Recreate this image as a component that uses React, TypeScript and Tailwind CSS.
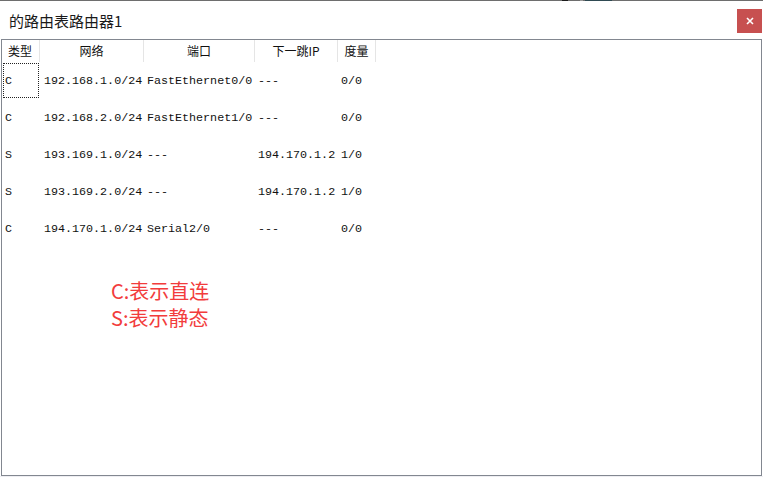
const rows = [
  { t: "C", net: "192.168.1.0/24", port: "FastEthernet0/0", hop: "---", m: "0/0" },
  { t: "C", net: "192.168.2.0/24", port: "FastEthernet1/0", hop: "---", m: "0/0" },
  { t: "S", net: "193.169.1.0/24", port: "---", hop: "194.170.1.2", m: "1/0" },
  { t: "S", net: "193.169.2.0/24", port: "---", hop: "194.170.1.2", m: "1/0" },
  { t: "C", net: "194.170.1.0/24", port: "Serial2/0", hop: "---", m: "0/0" },
];

const cols = ["w-[38px]", "w-[104px]", "w-[111px]", "w-[83px]", "w-[38px]"];

const App = () => {
  return (
    <div className="w-[763px] h-[477px] bg-white flex flex-col overflow-hidden font-['Noto_Sans_CJK_SC',sans-serif]">
      {/* top edge */}
      <div className="h-px flex bg-[#6e6e6e]">
        <div className="ml-[562px] w-[6px] bg-[#1c1c1c]" />
        <div className="ml-[12px] w-[3px] bg-[#9a9a9a]" />
        <div className="ml-[2px] w-[27px] bg-[#2f4a52]" />
      </div>

      {/* title bar */}
      <div className="h-[38px] flex justify-between pl-[9px] pr-px">
        <p className="text-[15px] leading-none text-[#1a1a1a] mt-[12px]">的路由表路由器1</p>
        <button className="w-[25px] h-[24px] mt-[8px] bg-[#c75050] flex items-center justify-center">
          <svg width="8" height="8" viewBox="0 0 8 8">
            <path d="M1 1L7 7M7 1L1 7" stroke="#fff" strokeWidth="1.6" />
          </svg>
        </button>
      </div>

      {/* list */}
      <div className="ml-px w-[761px] h-[437px] border border-[#828790] bg-white flex flex-col">
        {/* header */}
        <div className="h-[22px] flex text-[12px] text-[#111]">
          {["类型", "网络", "端口", "下一跳IP", "度量"].map((h, i) => (
            <div
              key={h}
              className={`${cols[i]} h-full border-r border-[#e5e5e5] flex items-center ${i === 0 ? "pl-[6px]" : "justify-center"}`}
            >
              {h}
            </div>
          ))}
        </div>

        {/* rows */}
        <div className="flex flex-col font-['Liberation_Mono',monospace] text-[11.7px] text-[#111]">
          {rows.map((r, idx) => (
            <div key={idx} className="h-[37px] flex">
              <div className="w-[38px] h-full p-px">
                <div className={`h-full flex items-center pl-px pt-[3px] ${idx === 0 ? "border border-dotted border-[#222]" : "border border-transparent"}`}>
                  {r.t}
                </div>
              </div>
              <div className="w-[104px] flex items-center pl-[4px] pt-[3px] whitespace-nowrap">{r.net}</div>
              <div className="w-[111px] flex items-center pl-[3px] pt-[3px] whitespace-nowrap">{r.port}</div>
              <div className="w-[83px] flex items-center pl-[3px] pt-[3px] whitespace-nowrap">{r.hop}</div>
              <div className="w-[38px] flex items-center pl-[3px] pt-[3px] whitespace-nowrap">{r.m}</div>
            </div>
          ))}
        </div>

        {/* legend */}
        <div className="mt-[30px] pl-[109px] text-[20px] leading-[27px] text-[#f23c3c]">
          <p>C:表示直连</p>
          <p>S:表示静态</p>
        </div>
      </div>

      <div className="h-px bg-[#eeeef2]" />
    </div>
  );
};

export default App;
